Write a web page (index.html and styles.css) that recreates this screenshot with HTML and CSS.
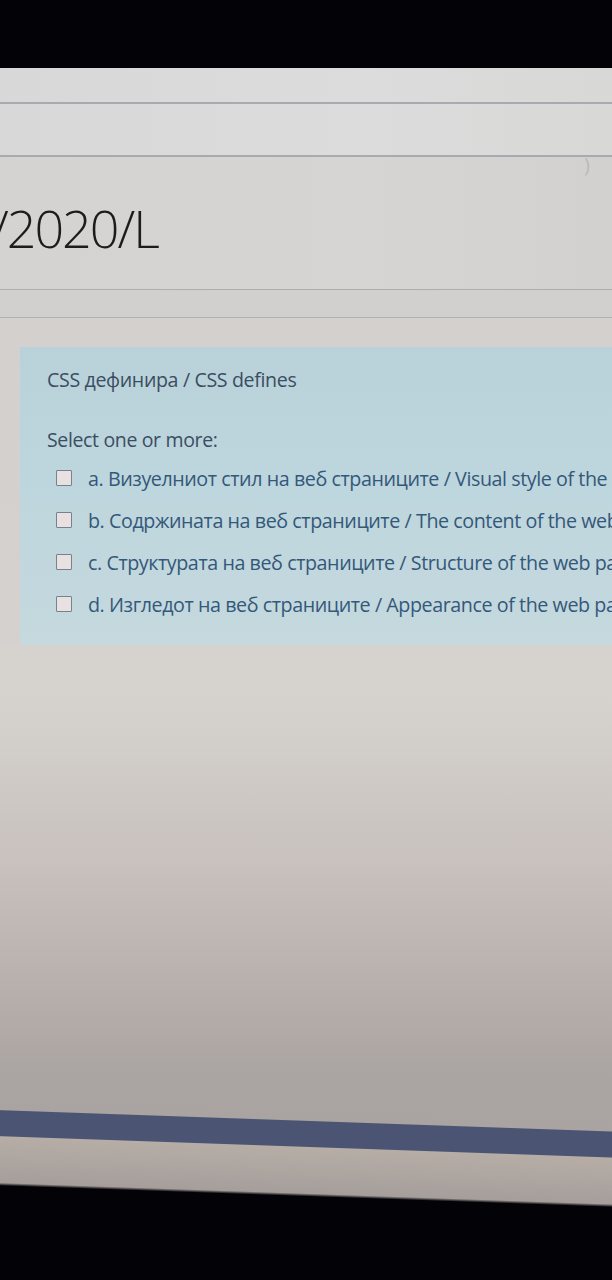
FILE: index.html
```html
<!DOCTYPE html>
<html lang="mk">
<head>
<meta charset="utf-8">
<title>Quiz</title>
<link rel="stylesheet" href="styles.css">
</head>
<body>
<div class="page">
  <div class="bezel-top"></div>
  <div class="nav nav-one"></div>
  <div class="nav nav-two"><span class="glint">)</span></div>
  <header class="header"><h1 class="title">/2020/L</h1></header>
  <div class="band"></div>
  <main class="content">
    <section class="qbox">
      <p class="qtext">CSS дефинира / CSS defines</p>
      <p class="prompt">Select one or more:</p>
      <div class="answers">
        <label class="answer"><span class="box"></span><span class="atext">a. Визуелниот стил на веб страниците / Visual style of the web pages</span></label>
        <label class="answer"><span class="box"></span><span class="atext">b. Содржината на веб страниците / The content of the web pages</span></label>
        <label class="answer"><span class="box"></span><span class="atext">c. Структурата на веб страниците / Structure of the web pages</span></label>
        <label class="answer"><span class="box"></span><span class="atext">d. Изгледот на веб страниците / Appearance of the web pages</span></label>
      </div>
    </section>
  </main>
  <div class="lower"></div>
  <footer class="bottom"></footer>
</div>
</body>
</html>
```

FILE: styles.css
```css
* { box-sizing: border-box; }
html, body { margin: 0; padding: 0; }
body {
  width: 612px;
  height: 1280px;
  overflow: hidden;
  background: #030206;
  font-family: "Open Sans", "Noto Sans", sans-serif;
}
.page {
  display: flex;
  flex-direction: column;
  height: 1280px;
  overflow: hidden;
}
.bezel-top {
  height: 68px;
  flex: none;
  background: #030206;
}
.nav {
  flex: none;
  background: linear-gradient(90deg, #d9d8d8, #dcdcdc 60%, #d8d8d7);
  border-bottom: 2px solid #a9a9b0;
}
.nav-one { height: 36px; }
.nav-two {
  height: 53px;
  display: flex;
  justify-content: flex-end;
  align-items: flex-end;
  padding-right: 22px;
}
.glint {
  color: #b9b9bc;
  font-size: 20px;
  line-height: 1;
  transform: translateY(20px);
}
.header {
  flex: none;
  height: 133px;
  background: linear-gradient(90deg, #d5d3d1, #d6d5d3 60%, #d2d1cf);
  border-bottom: 1px solid #aeadad;
  display: flex;
  align-items: flex-start;
}
.title {
  margin: 40px 0 0 -9px;
  font-family: "Open Sans", "Noto Sans", sans-serif;
  font-weight: 300;
  font-size: 52px;
  line-height: 1.2;
  letter-spacing: -2px;
  color: #1c1c1e;
}
.band {
  flex: none;
  height: 28px;
  background: #d2d0ce;
  border-bottom: 1px solid #b2b0b0;
}
.content {
  flex: none;
  padding: 29px 0 0 20px;
  background: linear-gradient(180deg, #d3d0cd, #d4d1ce);
}
.qbox {
  height: 298px;
  background: linear-gradient(180deg, #b9d2da 0%, #bed6dd 50%, #c5d9de 100%);
  padding: 21px 0 0 27px;
  overflow: hidden;
}
.qtext {
  margin: 0;
  font-size: 19.6px;
  line-height: 24px;
  color: #3b4d62;
  white-space: nowrap;
  letter-spacing: -0.018em;
}
.prompt {
  margin: 36px 0 0 0;
  font-size: 19.5px;
  line-height: 24px;
  color: #3b4d62;
  white-space: nowrap;
  letter-spacing: -0.018em;
}
.answers {
  display: flex;
  flex-direction: column;
  gap: 18px;
  margin-top: 14px;
  padding-left: 9px;
}
.answer {
  display: flex;
  align-items: center;
  gap: 16px;
  height: 24px;
  white-space: nowrap;
}
.box {
  flex: none;
  width: 16px;
  height: 16px;
  border: 1.5px solid #77838c;
  background: #e8e0e1;
  border-radius: 1px;
}
.atext {
  font-size: 19.7px;
  color: #34587a;
  letter-spacing: -0.022em;
}
.lower {
  flex: 1;
  background: linear-gradient(180deg, #d6d3ce 0%, #d5d2cd 15%, #c8c1bd 50%, #b3aca8 85%, #aaa4a2 100%);
}
.bottom {
  flex: none;
  height: 200px;
  background: linear-gradient(182deg,
    #aaa4a2 0,
    #a9a3a1 51px,
    #4b5473 52px,
    #4b5473 77px,
    #b6ada6 78px,
    #a59e9b 124px,
    #030206 127px,
    #030206 100%);
}
```
